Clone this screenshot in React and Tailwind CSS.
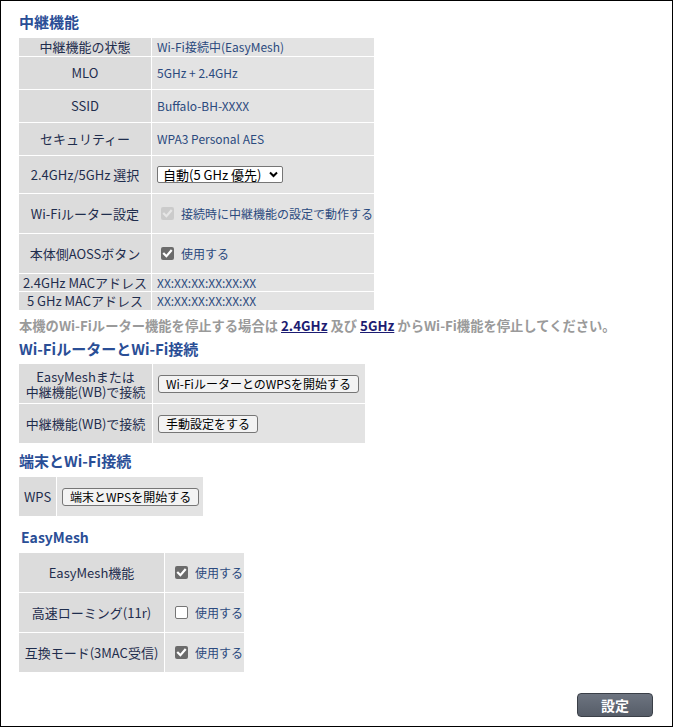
import React from "react";

const F = { fontFamily: '"Noto Sans CJK JP", "Noto Sans", sans-serif' };

function Check({ state }) {
  if (state === "off") {
    return <span className="inline-block w-[13px] h-[13px] rounded-[2px] border border-[#767676] bg-white shrink-0" />;
  }
  const bg = state === "disabled" ? "bg-[#cbcbcb]" : "bg-[#6b6b6b]";
  const stroke = state === "disabled" ? "#e6e6e6" : "#ffffff";
  return (
    <span className={`inline-flex items-center justify-center w-[13px] h-[13px] rounded-[2px] ${bg} shrink-0`}>
      <svg width="11" height="11" viewBox="0 0 11 11">
        <path d="M2 5.8 L4.4 8.2 L9 2.8" fill="none" stroke={stroke} strokeWidth="2.2" strokeLinecap="square" />
      </svg>
    </span>
  );
}

function Btn({ children }) {
  return (
    <button className="h-[18px] px-[7px] bg-[#f3f3f3] border border-[#767676] rounded-[3px] text-[12px] leading-[16px] text-black whitespace-nowrap">
      {children}
    </button>
  );
}

const L = "bg-[#dcdcdc] text-[#1f2d4d] text-[13px] flex items-center justify-center text-center whitespace-nowrap";
const V = "bg-[#e3e3e3] text-[#2b4a7e] text-[12px] flex items-center pl-[5px] whitespace-nowrap";
const H = "h-[20px] leading-[20px] text-[15px] font-bold text-[#2a4e96]";

export default function App() {
  return (
    <div style={F} className="w-[673px] h-[727px] border border-black bg-white flex flex-col pl-[18px] pt-[11px]">
      <div className={H}>中継機能</div>

      <div className="mt-[6px] grid grid-cols-[132px_222px] grid-rows-[18px_32px_32px_32px_37px_39px_39px_17px_18px] gap-px w-[355px]">
        <div className={`${L} text-[13.5px]`}>中継機能の状態</div>
        <div className={V}>Wi-Fi接続中(EasyMesh)</div>
        <div className={`${L} text-[13.5px]`}>MLO</div>
        <div className={V}>5GHz + 2.4GHz</div>
        <div className={`${L} text-[13.5px]`}>SSID</div>
        <div className={V}>Buffalo-BH-XXXX</div>
        <div className={`${L} text-[13.5px]`}>セキュリティー</div>
        <div className={V}>WPA3 Personal AES</div>
        <div className={`${L} text-[13.5px]`}>2.4GHz/5GHz 選択</div>
        <div className={V}>
          <div className="h-[17px] w-[126px] bg-white border border-[#767676] rounded-[2px] flex items-center justify-between pl-[5px] pr-[4px] text-black text-[13px] leading-[15px]">
            <span>自動(5 GHz 優先)</span>
            <svg width="9" height="7" viewBox="0 0 9 7">
              <path d="M1 1.5 L4.5 5 L8 1.5" fill="none" stroke="#000" strokeWidth="2" />
            </svg>
          </div>
        </div>
        <div className={`${L} text-[13.5px]`}>Wi-Fiルーター設定</div>
        <div className={V}>
          <span className="ml-[4px] mr-[7px] flex"><Check state="disabled" /></span>
          <span>接続時に中継機能の設定で動作する</span>
        </div>
        <div className={`${L} text-[13.5px]`}>本体側AOSSボタン</div>
        <div className={V}>
          <span className="ml-[4px] mr-[7px] flex"><Check state="on" /></span>
          <span>使用する</span>
        </div>
        <div className={L}>2.4GHz MACアドレス</div>
        <div className={V}>XX:XX:XX:XX:XX:XX</div>
        <div className={L}>5 GHz MACアドレス</div>
        <div className={V}>XX:XX:XX:XX:XX:XX</div>
      </div>

      <div className="mt-[7px] h-[18px] leading-[18px] text-[13.3px] font-bold text-[#9a9a9a] whitespace-nowrap">
        本機のWi-Fiルーター機能を停止する場合は <a className="text-[#1c1c72] underline">2.4GHz</a> 及び <a className="text-[#1c1c72] underline">5GHz</a> からWi-Fi機能を停止してください。
      </div>

      <div className={`mt-[4px] ${H}`}>Wi-FiルーターとWi-Fi接続</div>

      <div className="mt-[5px] grid grid-cols-[133px_212px] grid-rows-[39px_39px] gap-px w-[346px]">
        <div className={`${L} flex-col leading-[15px]`}>
          <span>EasyMeshまたは</span>
          <span>中継機能(WB)で接続</span>
        </div>
        <div className={V}>
          <Btn>Wi-FiルーターとのWPSを開始する</Btn>
        </div>
        <div className={L}>中継機能(WB)で接続</div>
        <div className={V}>
          <Btn>手動設定をする</Btn>
        </div>
      </div>

      <div className={`mt-[8px] ${H}`}>端末とWi-Fi接続</div>

      <div className="mt-[6px] grid grid-cols-[37px_146px] grid-rows-[39px] gap-px w-[184px]">
        <div className={L}>WPS</div>
        <div className={V}>
          <Btn>端末とWPSを開始する</Btn>
        </div>
      </div>

      <div className="mt-[11px] h-[20px] leading-[20px] text-[14px] font-bold text-[#2a4e96] pl-[2px]">EasyMesh</div>

      <div className="mt-[6px] grid grid-cols-[145px_79px] grid-rows-[39px_39px_39px] gap-px w-[225px]">
        <div className={L}>EasyMesh機能</div>
        <div className={V}>
          <span className="ml-[5px] mr-[7px] flex"><Check state="on" /></span>
          <span>使用する</span>
        </div>
        <div className={L}>高速ローミング(11r)</div>
        <div className={V}>
          <span className="ml-[5px] mr-[7px] flex"><Check state="off" /></span>
          <span>使用する</span>
        </div>
        <div className={L}>互換モード(3MAC受信)</div>
        <div className={V}>
          <span className="ml-[5px] mr-[7px] flex"><Check state="on" /></span>
          <span>使用する</span>
        </div>
      </div>

      <div className="mt-[20px] self-end mr-[19px]">
        <button className="w-[76px] h-[24px] rounded-[4px] border border-[#3a3f47] bg-gradient-to-b from-[#6d7480] to-[#565d68] text-white text-[14px] font-bold leading-[22px]">
          設定
        </button>
      </div>
    </div>
  );
}
